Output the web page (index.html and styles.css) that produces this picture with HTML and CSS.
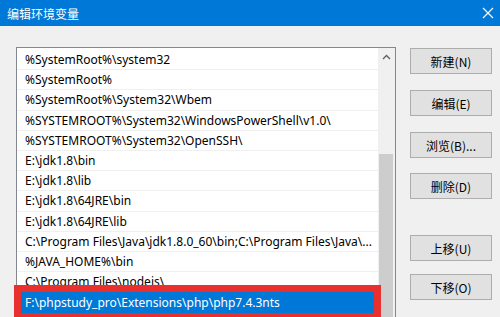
FILE: index.html
```html
<!DOCTYPE html>
<html lang="zh-CN">
<head>
<meta charset="utf-8">
<title>编辑环境变量</title>
<link rel="stylesheet" href="styles.css">
</head>
<body>
<div class="window">
  <div class="titlebar">
    <span class="title">编辑环境变量</span>
    <svg class="close" width="12" height="12" viewBox="0 0 12 12"><path d="M1 1L11 11M11 1L1 11" stroke="#fff" stroke-width="1.2" fill="none"/></svg>
  </div>
  <div class="content">
    <div class="list">
      <div class="rows">
        <div class="row">%SystemRoot%\system32</div>
        <div class="row">%SystemRoot%</div>
        <div class="row">%SystemRoot%\System32\Wbem</div>
        <div class="row">%SYSTEMROOT%\System32\WindowsPowerShell\v1.0\</div>
        <div class="row">%SYSTEMROOT%\System32\OpenSSH\</div>
        <div class="row">E:\jdk1.8\bin</div>
        <div class="row">E:\jdk1.8\lib</div>
        <div class="row">E:\jdk1.8\64JRE\bin</div>
        <div class="row">E:\jdk1.8\64JRE\lib</div>
        <div class="row">C:\Program Files\Java\jdk1.8.0_60\bin;C:\Program Files\Java\...</div>
        <div class="row">%JAVA_HOME%\bin</div>
        <div class="row">C:\Program Files\nodejs\</div>
        <div class="row selected">F:\phpstudy_pro\Extensions\php\php7.4.3nts</div>
      </div>
      <div class="scrollbar">
        <div class="arrow"><svg width="9" height="6" viewBox="0 0 9 6"><path d="M1 5L4.5 1.5L8 5" stroke="#606060" stroke-width="1.4" fill="none"/></svg></div>
        <div class="track"></div>
        <div class="thumb"></div>
      </div>
    </div>
    <div class="buttons">
      <button class="btn b1">新建(N)</button>
      <button class="btn b2">编辑(E)</button>
      <button class="btn b3">浏览(B)...</button>
      <button class="btn b4">删除(D)</button>
      <button class="btn b5">上移(U)</button>
      <button class="btn b6">下移(O)</button>
    </div>
    <div class="highlight"></div>
  </div>
</div>
</body>
</html>
```
FILE: styles.css
```css
html, body {
  margin: 0;
  padding: 0;
}
body {
  width: 500px;
  height: 317px;
  overflow: hidden;
  background: #f0f0f0;
  font-family: "Noto Sans", "Noto Sans CJK SC", sans-serif;
  font-size: 12px;
  color: #000;
}
.window {
  display: flex;
  flex-direction: column;
  height: 317px;
  overflow: hidden;
}
.titlebar {
  height: 26px;
  flex: none;
  background: #0078d7;
  display: flex;
  align-items: center;
  justify-content: space-between;
  padding: 0 6px 0 7px;
  color: #fff;
}
.title {
  font-family: "Noto Sans CJK SC", sans-serif;
  font-size: 12px;
}
.content {
  position: relative;
  display: flex;
  padding: 21px 0 0 16px;
  gap: 14px;
  flex: 1;
  min-height: 0;
  overflow: hidden;
}
.list {
  width: 378px;
  border: 1px solid #828790;
  border-bottom: none;
  background: #fff;
  display: flex;
  align-self: stretch;
  overflow: hidden;
}
.rows {
  flex: 1;
  padding-top: 2px;
}
.row {
  height: 19.2px;
  line-height: 19.2px;
  border-bottom: 1px solid #f0f0f0;
  padding-left: 8px;
  white-space: nowrap;
  overflow: hidden;
}
.row.selected {
  background: #0078d7;
  color: #fff;
  height: 21px;
  line-height: 21px;
}
.scrollbar {
  width: 17px;
  background: #f0f0f0;
  display: flex;
  flex-direction: column;
}
.arrow {
  height: 17px;
  display: flex;
  align-items: center;
  justify-content: center;
  flex: none;
}
.track {
  height: 89px;
  flex: none;
}
.thumb {
  flex: 1;
  margin: 0 2px 0 1px;
  background: #cdcdcd;
}
.buttons {
  display: flex;
  flex-direction: column;
  padding-top: 1px;
}
.btn {
  width: 82px;
  height: 26px;
  flex: none;
  border: 1px solid #adadad;
  background: #e1e1e1;
  font-family: "Noto Sans CJK SC", sans-serif;
  font-size: 12px;
  color: #000;
  padding: 0;
}
.b2, .b3 { margin-top: 16px; }
.b4 { margin-top: 15px; }
.b5 { margin-top: 36px; }
.b6 { margin-top: 13px; }
.highlight {
  position: absolute;
  left: 14px;
  top: 259px;
  width: 353px;
  height: 21px;
  border: 7px solid #e8302e;
  border-bottom-width: 4px;
}
```
